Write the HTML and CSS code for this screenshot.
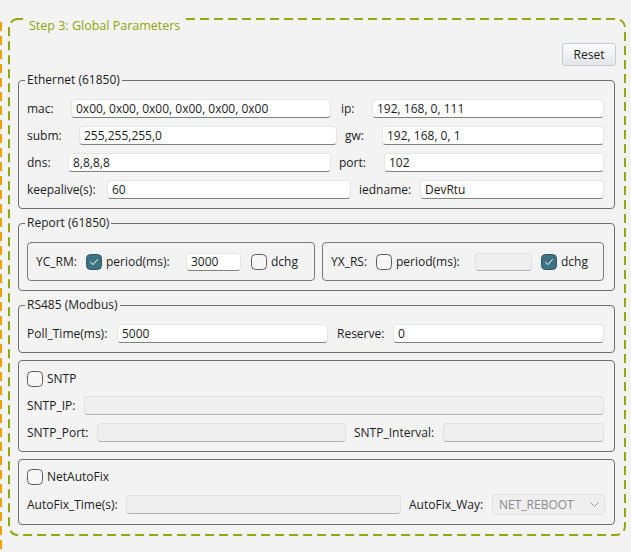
FILE: index.html
```html
<!DOCTYPE html>
<html>
<head>
<meta charset="utf-8">
<link rel="stylesheet" href="styles.css">
</head>
<body>
<svg class="side-rule" width="2" height="530" viewBox="0 0 2 530"><line x1="1" y1="0" x2="1" y2="530" stroke="#f2a100" stroke-width="2" stroke-dasharray="9 5"/></svg>
<div class="frame">
  <svg class="frame-border" width="618" height="518" viewBox="0 0 618 518"><rect x="1" y="1" width="616" height="516" rx="9" ry="9" fill="none" stroke="#93a80c" stroke-width="2" stroke-dasharray="9 5"/></svg>
  <div class="frame-title">Step 3: Global Parameters</div>
  <div class="toolbar"><button class="btn">Reset</button></div>

  <fieldset class="group g-eth">
    <legend>Ethernet (61850)</legend>
    <div class="rows">
      <div class="row">
        <span class="lbl w44">mac:</span><input class="field w260" value="0x00, 0x00, 0x00, 0x00, 0x00, 0x00">
        <span class="lbl w31 ml10">ip:</span><input class="field grow" value="192, 168, 0, 111">
      </div>
      <div class="row">
        <span class="lbl w52">subm:</span><input class="field w258" value="255,255,255,0">
        <span class="lbl w37 ml8">gw:</span><input class="field grow" value="192, 168, 0, 1">
      </div>
      <div class="row">
        <span class="lbl w41">dns:</span><input class="field w263" value="8,8,8,8">
        <span class="lbl w45 ml8">port:</span><input class="field grow" value="102">
      </div>
      <div class="row">
        <span class="lbl w80">keepalive(s):</span><input class="field w244" value="60">
        <span class="lbl w61 ml8">iedname:</span><input class="field grow" value="DevRtu">
      </div>
    </div>
  </fieldset>

  <fieldset class="group g-report">
    <legend>Report (61850)</legend>
    <div class="subrow">
      <div class="subbox sub-left">
        <span class="lbl w50">YC_RM:</span>
        <span class="cb checked"><svg width="16" height="16" viewBox="0 0 16 16"><rect x="0.5" y="0.5" width="15" height="15" rx="4" fill="#3e7383" stroke="#2b5664"/><path d="M4.6 8.3 L7 10.6 L11.4 5.6" fill="none" stroke="#fff" stroke-width="1" stroke-linecap="round" stroke-linejoin="round"/></svg></span>
        <span class="lbl w80 ml4">period(ms):</span>
        <input class="field small w55" value="3000">
        <span class="cb ml10"><svg width="16" height="16" viewBox="0 0 16 16"><rect x="0.5" y="0.5" width="15" height="15" rx="4" fill="#f7f7f7" stroke="#5c5c5c"/></svg></span>
        <span class="lbl ml4">dchg</span>
      </div>
      <div class="subbox sub-right">
        <span class="lbl w45">YX_RS:</span>
        <span class="cb"><svg width="16" height="16" viewBox="0 0 16 16"><rect x="0.5" y="0.5" width="15" height="15" rx="4" fill="#f7f7f7" stroke="#5c5c5c"/></svg></span>
        <span class="lbl w79 ml4">period(ms):</span>
        <input class="field small dis w57" value="" disabled>
        <span class="cb checked ml9"><svg width="16" height="16" viewBox="0 0 16 16"><rect x="0.5" y="0.5" width="15" height="15" rx="4" fill="#3e7383" stroke="#2b5664"/><path d="M4.6 8.3 L7 10.6 L11.4 5.6" fill="none" stroke="#fff" stroke-width="1" stroke-linecap="round" stroke-linejoin="round"/></svg></span>
        <span class="lbl ml4">dchg</span>
      </div>
    </div>
  </fieldset>

  <fieldset class="group g-rs485">
    <legend>RS485 (Modbus)</legend>
    <div class="rows">
      <div class="row">
        <span class="lbl w90">Poll_Time(ms):</span><input class="field w211" value="5000">
        <span class="lbl w56 ml9">Reserve:</span><input class="field grow" value="0">
      </div>
    </div>
  </fieldset>

  <fieldset class="group g-sntp">
    <div class="rows">
      <div class="row check-row">
        <span class="cb"><svg width="16" height="16" viewBox="0 0 16 16"><rect x="0.5" y="0.5" width="15" height="15" rx="4" fill="#f7f7f7" stroke="#5c5c5c"/></svg></span>
        <span class="lbl ml4">SNTP</span>
      </div>
      <div class="row">
        <span class="lbl w57">SNTP_IP:</span><input class="field dis grow" value="" disabled>
      </div>
      <div class="row">
        <span class="lbl w70">SNTP_Port:</span><input class="field dis w249" value="" disabled>
        <span class="lbl w89 ml8">SNTP_Interval:</span><input class="field dis grow" value="" disabled>
      </div>
    </div>
  </fieldset>

  <fieldset class="group g-fix">
    <div class="rows">
      <div class="row check-row">
        <span class="cb"><svg width="16" height="16" viewBox="0 0 16 16"><rect x="0.5" y="0.5" width="15" height="15" rx="4" fill="#f7f7f7" stroke="#5c5c5c"/></svg></span>
        <span class="lbl ml4">NetAutoFix</span>
      </div>
      <div class="row tall">
        <span class="lbl w99">AutoFix_Time(s):</span><input class="field dis w275" value="" disabled>
        <span class="lbl w83 ml8">AutoFix_Way:</span>
        <div class="combo"><span>NET_REBOOT</span><svg width="9" height="5" viewBox="0 0 9 5"><path d="M0.5 0.5 L4.5 4.5 L8.5 0.5" fill="none" stroke="#9a9a9a" stroke-width="1"/></svg></div>
      </div>
    </div>
  </fieldset>
</div>
</body>
</html>
```

FILE: styles.css
```css
html, body {
  margin: 0;
  background: #f3f3f3;
}
body {
  position: relative;
  height: 552px;
  overflow: hidden;
  box-sizing: border-box;
  padding: 18px 0 0 8px;
  font-family: "Open Sans", "Liberation Sans", sans-serif;
  font-size: 12px;
  color: #1c1c1c;
}
.side-rule {
  position: absolute;
  left: 0;
  top: 22px;
}
.frame {
  position: relative;
  width: 618px;
  height: 518px;
  box-sizing: border-box;
  padding: 25px 11px 0 10px;
}
.frame-border {
  position: absolute;
  left: 0;
  top: 0;
}
.frame-title {
  position: absolute;
  left: 15px;
  top: -2px;
  padding: 2px 6px 0;
  line-height: 16px;
  font-size: 12.5px;
  color: #8fa60a;
  background: #f3f3f3;
}
.toolbar {
  display: flex;
  justify-content: flex-end;
  height: 23px;
  margin-right: -1px;
}
.btn {
  width: 54px;
  height: 23px;
  padding: 0;
  box-sizing: border-box;
  border: 1px solid #c6cacf;
  border-radius: 3px;
  background: linear-gradient(#fafbfc, #e3e6e9);
  font: inherit;
  color: #1c1c1c;
}
.group {
  margin: 6px 0 0 0;
  min-width: 0;
  border: 1px solid #6f6f6f;
  border-radius: 4px;
  padding: 10px 10px 9px 8px;
}
.group legend {
  padding: 0 2px;
  margin-left: -2px;
  line-height: 16px;
  font-size: 12px;
}
.g-eth { padding-top: 11px; }
.g-report { padding-top: 11px; }
.g-rs485 { padding-top: 11px; }
.g-sntp { margin-top: 7px; padding-top: 10px; }
.g-fix { margin-top: 7px; padding-top: 9px; }

.rows {
  display: flex;
  flex-direction: column;
  gap: 8px;
}
.row {
  display: flex;
  align-items: center;
  height: 19px;
}
.row.check-row {
  height: 16px;
  margin-bottom: 1px;
}
.row.tall { height: 21px; }

.lbl {
  flex: none;
  white-space: nowrap;
  line-height: 16px;
}
.field {
  flex: none;
  height: 19px;
  box-sizing: border-box;
  margin: 0;
  padding: 0 4px;
  border: 1px solid #e6e6e6;
  border-bottom-color: #808080;
  border-radius: 4px;
  background: #ffffff;
  font: inherit;
  color: #1c1c1c;
  outline: none;
}
.field.small { height: 18px; }
.field.dis {
  background: #efefef;
  border-color: #e0e0e0;
  border-bottom-color: #b2b2b2;
}
.grow { flex: 1 1 0; min-width: 0; width: auto; }

.cb {
  flex: none;
  display: block;
  width: 16px;
  height: 16px;
}
.cb svg { display: block; }

.subrow {
  display: flex;
  gap: 7px;
}
.subbox {
  display: flex;
  align-items: center;
  height: 39px;
  box-sizing: border-box;
  padding-left: 8px;
  border: 1px solid #7a7a7a;
  border-radius: 4px;
}
.sub-left { width: 288px; flex: none; }
.sub-right { flex: 1 1 0; min-width: 0; }

.combo {
  flex: none;
  width: 113px;
  height: 21px;
  box-sizing: border-box;
  display: flex;
  align-items: center;
  justify-content: space-between;
  padding: 0 5px 0 6px;
  border: 1px solid #e0e0e0;
  border-radius: 4px;
  background: #efefef;
  color: #8c8c8c;
}
.combo svg { display: block; }

.ml4 { margin-left: 4px; }
.ml8 { margin-left: 8px; }
.ml9 { margin-left: 9px; }
.ml10 { margin-left: 10px; }

.w31 { width: 31px; }
.w37 { width: 37px; }
.w41 { width: 41px; }
.w44 { width: 44px; }
.w45 { width: 45px; }
.w50 { width: 50px; }
.w52 { width: 52px; }
.w55 { width: 55px; }
.w56 { width: 56px; }
.w57 { width: 57px; }
.w61 { width: 61px; }
.w70 { width: 70px; }
.w79 { width: 79px; }
.w80 { width: 80px; }
.w83 { width: 83px; }
.w89 { width: 89px; }
.w90 { width: 90px; }
.w99 { width: 99px; }
.w211 { width: 211px; }
.w244 { width: 244px; }
.w249 { width: 249px; }
.w258 { width: 258px; }
.w260 { width: 260px; }
.w263 { width: 263px; }
.w275 { width: 275px; }
```
